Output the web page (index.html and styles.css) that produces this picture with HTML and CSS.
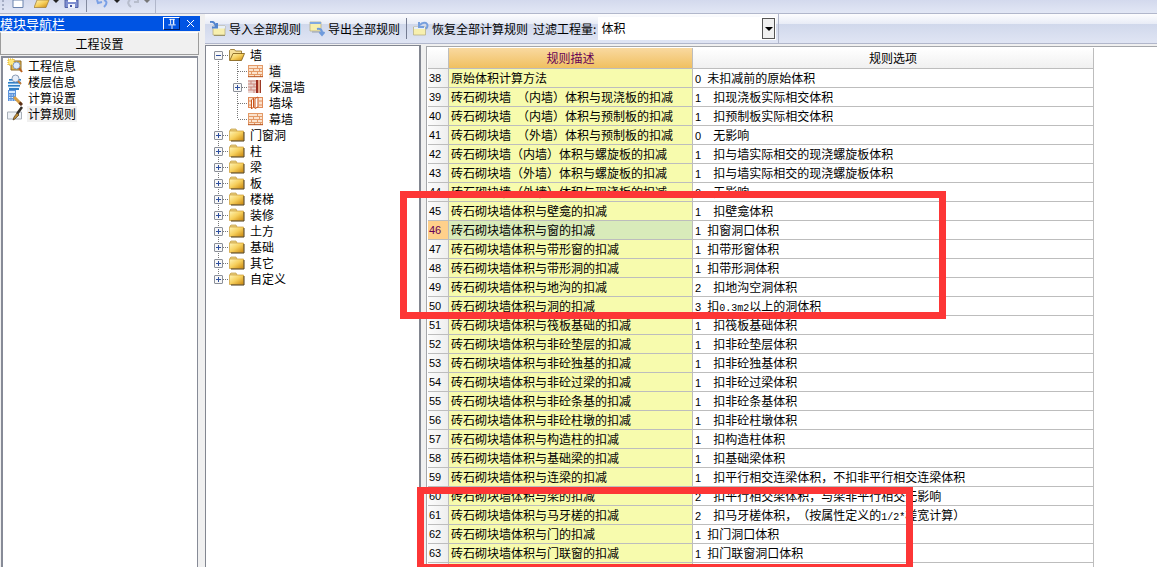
FILE: index.html
```html
<!DOCTYPE html>
<html lang="zh-CN">
<head>
<meta charset="utf-8">
<title>计算规则</title>
<link rel="stylesheet" href="styles.css">
</head>
<body>
<svg class="defs" aria-hidden="true">
  <defs>
    <linearGradient id="gold" x1="0" y1="0" x2="1" y2="1"><stop offset="0" stop-color="#fff6b8"/><stop offset=".5" stop-color="#f6cf5c"/><stop offset="1" stop-color="#c9850c"/></linearGradient>
    <symbol id="folder" viewBox="0 0 16 16"><path d="M1 4V3l1-1h5l1 2" fill="#e8cf80" stroke="#c09a40" stroke-width=".7"/><path d="M.5 4h14v9.500h-14z" fill="url(#gold)" stroke="#c89a34" stroke-width=".7"/><path d="M2 14h13V5" fill="none" stroke="#4d3812"/></symbol>
    <symbol id="folder-open" viewBox="0 0 16 16"><path d="M.5 13.500V3.500l1-1h4l1 1.500h6v3" fill="#f6e09a" stroke="#8d6a1e" stroke-width=".8"/><path d="M.8 13.500L4 6.500h11.500l-3 7z" fill="url(#gold)" stroke="#7a5812" stroke-width=".8"/></symbol>
    <symbol id="bricks" viewBox="0 0 16 16"><path d="M0 2h15v12H0z" fill="#fbe3cd"/><path d="M0 2.500h15M0 5.500h15M0 8.500h15M0 11.500h15M.5 2v12M14.500 2v12M9.500 2v3M5.500 5v3M11.500 5v3M3.500 8v3M9.500 8v3M6.500 11v3M12.500 11v3" stroke="#e39a68" fill="none"/><path d="M0 13.700h15" stroke="#b4511c"/></symbol>
    <symbol id="insulated" viewBox="0 0 16 16"><path d="M0 1h8v13H0z" fill="#ecd5d0"/><path d="M0 2h8M0 5h8M0 8h8M0 11h8M3 2v3M6 5v3M3 8v3M6 11v3" stroke="#cc8a80"/><path d="M8 1h2v13H8z" fill="#9d2e22"/><path d="M10 1h2v13h-2z" fill="#e9a88b"/><path d="M12.500 1v13" stroke="#9c3b27"/></symbol>
    <symbol id="pier" viewBox="0 0 16 16"><path d="M0 2h15v11H0z" fill="#fbe3cd"/><path d="M.5 2v11M14.500 2v11M0 2.500h15M0 6h4M0 10h4M11 6h4M11 10h4M0 12.500h15" stroke="#e08a58" fill="none"/><path d="M3.500 5l2-2v9l-2 2zM7 3.500l3-1.500v10l-3 1.500z" fill="#fff" stroke="#c9551c"/></symbol>
    <symbol id="sheet" viewBox="0 0 16 16"><path d="M3 5h12v9H3z" fill="#f7efae" stroke="#b1aa7c" stroke-width=".7"/><path d="M3 5h12v2.500H3z" fill="#e8f0f8"/><path d="M4 14.500h11" stroke="#9b946b"/></symbol>
  </defs>
</svg>
<div class="app">
  <header class="quickbar">
    <span class="grip"></span>
    <button class="quick" aria-label="新建"><svg viewBox="0 0 16 9"><path d="M3 0h10v7.500H3z" fill="#fff" stroke="#6b83ad"/></svg></button>
    <button class="quick wide" aria-label="打开"><svg viewBox="0 0 16 9"><path d="M0 7.500L3 0h12l-3 7.500z" fill="url(#gold)" stroke="#9b7935" stroke-width=".7"/></svg><i class="drop"></i></button>
    <button class="quick" aria-label="保存"><svg viewBox="0 0 16 9"><path d="M1 0h13v7.500H1z" fill="#7e8ed0" stroke="#5362a6"/><path d="M4 0h8v2H4z" fill="#fff"/><path d="M4 4h7v4H4z" fill="#eef1fb"/><path d="M6 5h2v2H6z" fill="#4353a2"/></svg></button>
    <span class="quick-sep"></span>
    <button class="quick wide" aria-label="撤销"><svg viewBox="0 0 16 9"><path d="M2 0l1 3 4-1M9 0q5 2 0 7" fill="none" stroke="#7aa0e6" stroke-width="2"/></svg><i class="drop"></i></button>
    <button class="quick wide" aria-label="恢复"><svg viewBox="0 0 16 9"><path d="M5 0q-4 3 1 7M9 2h4V0" fill="none" stroke="#b7bdcc" stroke-width="2"/></svg><i class="drop dim"></i></button>
    <span class="quick-end"></span>
  </header>
  <div class="workspace">
    <aside class="navigator">
      <div class="nav-title"><h1>模块导航栏</h1>
        <button class="pin" aria-label="固定"><svg viewBox="0 0 16 12"><path d="M5 1.500h6M6.500 1v6M10 1v6M4 7.500h8M8 8v4M9.500 2v5" stroke="#fff" fill="none"/></svg></button>
        <button class="close" aria-label="关闭"><svg viewBox="0 0 9 9"><path d="M1 1l7 7M8 1L1 8" stroke="#fff" fill="none"/></svg></button>
      </div>
      <button class="nav-section">工程设置</button>
      <ul class="nav-list">
        <li><svg viewBox="0 0 16 16"><path d="M4 3h10v9H4z" fill="#e5b84d" stroke="#8b6721"/><path d="M1 1h6v6H1z" fill="#ffe77a" stroke="#d8a51c" stroke-dasharray="1 1"/><circle cx="9.500" cy="7.500" r="3.500" fill="#dcebff" stroke="#8498b7"/><path d="M12 10l3 4" stroke="#b8601d" stroke-width="2"/></svg><button>工程信息</button></li>
        <li><svg viewBox="0 0 16 16"><path d="M2 5h12v2H2zM1 8h13v2H1zM1 11h12v2H1zM2 14h10v2H2z" fill="#2f7fc5"/><path d="M2 7h12M1 10h13M1 13h12" stroke="#bde3fb"/><circle cx="8.500" cy="4.500" r="3.500" fill="#e7effa" stroke="#8b9db4"/><path d="M11 7l3 3" stroke="#c07b3a" stroke-width="2"/></svg><button>楼层信息</button></li>
        <li><svg viewBox="0 0 16 16"><path d="M1 0h8v11H1z" fill="#5b93dc"/><path d="M2 1h6v2H2z" fill="#d6eaff"/><path d="M2 5h6M2 7.500h6M2 10h6" stroke="#e1f0ff" stroke-dasharray="1.500 1"/><path d="M7 7l7 7" stroke="#d79e45" stroke-width="3"/><path d="M12.500 12.500l2.500 2.500" stroke="#5c321a" stroke-width="3"/></svg><button>计算设置</button></li>
        <li><svg viewBox="0 0 16 16"><path d="M.5 6h14v7H.5z" fill="#eef2f7" stroke="#a8afb8"/><path d="M15 1l-5 7" stroke="#342f2a" stroke-width="2.500"/><path d="M10 7l2 2-4 4-2 1 1-3z" fill="#bc8b35" stroke="#50381a" stroke-width=".7"/></svg><button class="current">计算规则</button></li>
      </ul>
    </aside>
    <main class="main">
      <div class="rulebar">
        <button><svg viewBox="0 0 16 16"><use href="#sheet"/><path d="M0 1q5-1 6 5M2 6.500h5V2" stroke="#5284ce" stroke-width="2" fill="none"/></svg>导入全部规则</button>
        <button><svg viewBox="0 0 16 16"><path d="M1 1h11v9H1z" fill="#f7efae" stroke="#b1aa7c" stroke-width=".7"/><path d="M1 1h11v2H1z" fill="#81a9e0"/><path d="M3 11h8" stroke="#98a0ac"/><path d="M8 8q6-1 5 6M10.500 11l2.500 3 2.500-3" stroke="#6f9bdc" stroke-width="2" fill="none"/></svg>导出全部规则</button>
        <span class="bar-sep"></span>
        <button><svg viewBox="0 0 16 16"><path d="M.5 6h12v8H.5z" fill="#f7efae" stroke="#b1aa7c" stroke-width=".7"/><path d="M1 6h11v2H1z" fill="#e8f0f8"/><path d="M7 4q2-3 6-2 3 2 0 6M6 1v5h5" stroke="#769fdd" stroke-width="2" fill="none"/></svg>恢复全部计算规则</button>
        <label for="filter">过滤工程量:</label>
        <span class="combo"><select id="filter"><option>体积</option></select><span class="combo-arrow"></span></span>
        <span class="bar-end"></span>
      </div>
      <div class="panes">
        <nav class="tree-pane">
          <ul class="tree">
            <li><div class="node"><button class="toggle open" aria-label="折叠"></button><svg><use href="#folder-open"/></svg><span>墙</span></div>
              <ul>
                <li><div class="node leaf"><svg><use href="#bricks"/></svg><span class="current">墙</span></div></li>
                <li><div class="node"><button class="toggle" aria-label="展开"></button><svg><use href="#insulated"/></svg><span>保温墙</span></div></li>
                <li><div class="node leaf"><svg><use href="#pier"/></svg><span>墙垛</span></div></li>
                <li><div class="node leaf"><svg><use href="#bricks"/></svg><span>幕墙</span></div></li>
              </ul>
            </li>
            <li><div class="node"><button class="toggle" aria-label="展开"></button><svg><use href="#folder"/></svg><span>门窗洞</span></div></li>
            <li><div class="node"><button class="toggle" aria-label="展开"></button><svg><use href="#folder"/></svg><span>柱</span></div></li>
            <li><div class="node"><button class="toggle" aria-label="展开"></button><svg><use href="#folder"/></svg><span>梁</span></div></li>
            <li><div class="node"><button class="toggle" aria-label="展开"></button><svg><use href="#folder"/></svg><span>板</span></div></li>
            <li><div class="node"><button class="toggle" aria-label="展开"></button><svg><use href="#folder"/></svg><span>楼梯</span></div></li>
            <li><div class="node"><button class="toggle" aria-label="展开"></button><svg><use href="#folder"/></svg><span>装修</span></div></li>
            <li><div class="node"><button class="toggle" aria-label="展开"></button><svg><use href="#folder"/></svg><span>土方</span></div></li>
            <li><div class="node"><button class="toggle" aria-label="展开"></button><svg><use href="#folder"/></svg><span>基础</span></div></li>
            <li><div class="node"><button class="toggle" aria-label="展开"></button><svg><use href="#folder"/></svg><span>其它</span></div></li>
            <li><div class="node"><button class="toggle" aria-label="展开"></button><svg><use href="#folder"/></svg><span>自定义</span></div></li>
          </ul>
        </nav>
        <section class="table-pane">
          <table class="rules">
            <colgroup><col class="col-no"><col class="col-desc"><col class="col-option"></colgroup>
            <thead><tr><th></th><th class="active">规则描述</th><th>规则选项</th></tr></thead>
            <tbody>
              <tr><th>38</th><td>原始体积计算方法</td><td><b>0</b>&ensp;未扣减前的原始体积</td></tr>
              <tr><th>39</th><td>砖石砌块墙&ensp;（内墙）体积与现浇板的扣减</td><td><b>1</b>&ensp;&ensp;扣现浇板实际相交体积</td></tr>
              <tr><th>40</th><td>砖石砌块墙&ensp;（内墙）体积与预制板的扣减</td><td><b>1</b>&ensp;&ensp;扣预制板实际相交体积</td></tr>
              <tr><th>41</th><td>砖石砌块墙&ensp;（外墙）体积与预制板的扣减</td><td><b>0</b>&ensp;&ensp;无影响</td></tr>
              <tr><th>42</th><td>砖石砌块墙（内墙）体积与螺旋板的扣减</td><td><b>1</b>&ensp;&ensp;扣与墙实际相交的现浇螺旋板体积</td></tr>
              <tr><th>43</th><td>砖石砌块墙（外墙）体积与螺旋板的扣减</td><td><b>1</b>&ensp;&ensp;扣与墙实际相交的现浇螺旋板体积</td></tr>
              <tr><th>44</th><td>砖石砌块墙（外墙）体积与现浇板的扣减</td><td><b>0</b>&ensp;&ensp;无影响</td></tr>
              <tr><th>45</th><td>砖石砌块墙体积与壁龛的扣减</td><td><b>1</b>&ensp;&ensp;扣壁龛体积</td></tr>
              <tr class="selected"><th>46</th><td>砖石砌块墙体积与窗的扣减</td><td><b>1</b>&ensp;扣窗洞口体积</td></tr>
              <tr><th>47</th><td>砖石砌块墙体积与带形窗的扣减</td><td><b>1</b>&ensp;扣带形窗体积</td></tr>
              <tr><th>48</th><td>砖石砌块墙体积与带形洞的扣减</td><td><b>1</b>&ensp;扣带形洞体积</td></tr>
              <tr><th>49</th><td>砖石砌块墙体积与地沟的扣减</td><td><b>2</b>&ensp;&ensp;扣地沟空洞体积</td></tr>
              <tr><th>50</th><td>砖石砌块墙体积与洞的扣减</td><td><b>3</b>&ensp;扣<code>0.3m2</code>以上的洞体积</td></tr>
              <tr><th>51</th><td>砖石砌块墙体积与筏板基础的扣减</td><td><b>1</b>&ensp;&ensp;扣筏板基础体积</td></tr>
              <tr><th>52</th><td>砖石砌块墙体积与非砼垫层的扣减</td><td><b>1</b>&ensp;&ensp;扣非砼垫层体积</td></tr>
              <tr><th>53</th><td>砖石砌块墙体积与非砼独基的扣减</td><td><b>1</b>&ensp;&ensp;扣非砼独基体积</td></tr>
              <tr><th>54</th><td>砖石砌块墙体积与非砼过梁的扣减</td><td><b>1</b>&ensp;&ensp;扣非砼过梁体积</td></tr>
              <tr><th>55</th><td>砖石砌块墙体积与非砼条基的扣减</td><td><b>1</b>&ensp;&ensp;扣非砼条基体积</td></tr>
              <tr><th>56</th><td>砖石砌块墙体积与非砼柱墩的扣减</td><td><b>1</b>&ensp;&ensp;扣非砼柱墩体积</td></tr>
              <tr><th>57</th><td>砖石砌块墙体积与构造柱的扣减</td><td><b>1</b>&ensp;&ensp;扣构造柱体积</td></tr>
              <tr><th>58</th><td>砖石砌块墙体积与基础梁的扣减</td><td><b>1</b>&ensp;&ensp;扣基础梁体积</td></tr>
              <tr><th>59</th><td>砖石砌块墙体积与连梁的扣减</td><td><b>1</b>&ensp;&ensp;扣平行相交连梁体积，不扣非平行相交连梁体积</td></tr>
              <tr><th>60</th><td>砖石砌块墙体积与梁的扣减</td><td><b>2</b>&ensp;&ensp;扣平行相交梁体积，与梁非平行相交无影响</td></tr>
              <tr><th>61</th><td>砖石砌块墙体积与马牙槎的扣减</td><td><b>2</b>&ensp;&ensp;扣马牙槎体积，（按属性定义的<code>1/2*</code>槎宽计算）</td></tr>
              <tr><th>62</th><td>砖石砌块墙体积与门的扣减</td><td><b>1</b>&ensp;扣门洞口体积</td></tr>
              <tr><th>63</th><td>砖石砌块墙体积与门联窗的扣减</td><td><b>1</b>&ensp;扣门联窗洞口体积</td></tr>
              <tr><th></th><td></td><td></td></tr>
            </tbody>
          </table>
          <div class="mark mark-openings"></div>
          <div class="mark mark-doors"></div>
        </section>
      </div>
    </main>
  </div>
</div>
</body>
</html>
```
FILE: styles.css
```css
* { box-sizing: border-box; }

body {
  margin: 0;
  overflow: hidden;
  background: #f0f0f0;
  color: #000;
  font: 12px/16px "Noto Sans CJK SC", "Liberation Sans", sans-serif;
  text-spacing-trim: space-all;
}

button {
  margin: 0;
  padding: 0;
  border: 0;
  background: none;
  color: inherit;
  font: inherit;
}

ul {
  margin: 0;
  padding: 0;
  list-style: none;
}

svg {
  display: block;
  flex: none;
  width: 16px;
  height: 16px;
}

.defs {
  position: absolute;
  width: 0;
  height: 0;
}

.app {
  display: flex;
  flex-direction: column;
  height: 100vh;
}

/* Quick access strip */
.quickbar {
  display: flex;
  flex: none;
  align-items: flex-start;
  height: 14px;
  padding-left: 2px;
  border-bottom: 1px solid #b1b7cb;
  background: linear-gradient(#d3d9ed, #e2e7f5);
}

.grip {
  width: 2px;
  height: 11px;
  margin-right: 6px;
  background: repeating-linear-gradient(#a5adc4 0 2px, transparent 2px 4px);
}

.quick {
  display: flex;
  gap: 3px;
  margin-right: 8px;
}

.quick.wide { margin-right: 5px; }

.quick svg { height: 9px; }

.drop {
  border: 3px solid transparent;
  border-top-color: #222;
  border-bottom: 0;
}

.drop.dim { border-top-color: #777; }

.quick-sep {
  width: 1px;
  height: 12px;
  margin-right: 8px;
  margin-left: -2px;
  background: #848ba0;
}

.quick-end {
  width: 1px;
  height: 13px;
  background: #b1b7cb;
}

.workspace {
  display: flex;
  flex: 1;
  min-height: 0;
}

/* Module navigator */
.navigator {
  display: flex;
  flex: none;
  flex-direction: column;
  width: 200px;
  padding-top: 2px;
}

.nav-title {
  display: flex;
  align-items: center;
  height: 15px;
  padding-right: 5px;
  background: #0054e3;
  color: #fff;
}

.nav-title h1 {
  flex: 1;
  margin: 0;
  font: inherit;
  font-size: 13px;
}

.pin {
  display: grid;
  width: 17px;
  height: 13px;
  place-items: center;
  border: 1px solid #fff;
  border-right-color: #001d63;
  border-bottom-color: #001d63;
}

.pin svg { height: 11px; }

.close {
  margin-left: 6px;
}

.close svg {
  width: 9px;
  height: 9px;
}

.nav-section {
  height: 23px;
  margin: 1px 1px 1px 0;
  border: 1px solid #9c9c9c;
  border-top-color: #fff;
  background: #f0f0f0;
}

.nav-list {
  flex: 1;
  margin-right: 2px;
  margin-left: 1px;
  padding-left: 4px;
  border: 2px solid #878b97;
  border-right-width: 1px;
  border-bottom: 0;
  background: #fff;
}

.nav-list li {
  display: flex;
  gap: 4px;
  height: 16px;
}

.nav-list button {
  padding: 0 1px;
}

.current { background: #f0f0f0; }

/* Rule area */
.main {
  display: flex;
  flex: 1;
  flex-direction: column;
  min-width: 0;
  padding-left: 5px;
}

.rulebar {
  display: flex;
  flex: none;
  align-items: center;
  height: 30px;
  padding-left: 5px;
  border-bottom: 1px solid #b1b7cb;
  background: linear-gradient(#fdfdfe, #e9edf7 33%, #d0d8eb 34%, #e0e5f4);
}

.rulebar button {
  display: flex;
  gap: 3px;
  margin-right: 8px;
  white-space: nowrap;
}

.bar-sep {
  width: 1px;
  height: 21px;
  margin-right: 6px;
  margin-left: -2px;
  background: #747b91;
}

.rulebar button + label {
  margin-left: -3px;
  white-space: nowrap;
}

.combo {
  position: relative;
  width: 178px;
  height: 23px;
  margin-left: 2px;
}

.combo select {
  width: 100%;
  height: 100%;
  padding: 0 3px 2px;
  border: 0;
  border-radius: 0;
  outline: 0;
  appearance: none;
  background: #fff;
  color: #000;
  font: inherit;
}

.combo-arrow {
  position: absolute;
  top: 1px;
  right: 1px;
  display: grid;
  width: 13px;
  height: 21px;
  place-items: center;
  border: 1px solid #555;
  background: #f0f0f0;
  pointer-events: none;
}

.combo-arrow::before {
  border: 4px solid transparent;
  border-top-color: #000;
  border-bottom: 0;
  content: "";
}

.bar-end {
  width: 1px;
  height: 100%;
  margin-left: 2px;
  background: #b1b7cb;
}

.panes {
  display: flex;
  flex: 1;
  min-height: 0;
  padding-top: 1px;
}

/* Component tree */
.tree-pane {
  flex: none;
  width: 216px;
  padding: 1px 0 0 8px;
  border: 1px solid #828690;
  border-right-width: 2px;
  border-bottom: 0;
  background: #fff;
}

.tree li {
  background: repeating-linear-gradient(#777 0 1px, transparent 1px 2px) 4px 0 / 1px 100% no-repeat;
}

.tree li:last-child { background-size: 1px 8px; }

.tree > li:first-child { background-position: 4px 8px; }

.tree ul { margin-left: 19px; }

.node {
  display: flex;
  align-items: center;
  height: 16px;
  background: repeating-linear-gradient(90deg, #777 0 1px, transparent 1px 2px) 5px 8px / 10px 1px no-repeat;
}

.node.leaf { padding-left: 15px; }

.node span { margin-left: 5px; }

.toggle {
  width: 9px;
  height: 9px;
  margin-right: 6px;
  border: 1px solid #8b8f98;
  border-radius: 1px;
  background:
    linear-gradient(#2e4f9e, #2e4f9e) center / 5px 1px no-repeat,
    linear-gradient(#2e4f9e, #2e4f9e) center / 1px 5px no-repeat,
    #f7f7f7;
}

.toggle.open {
  background:
    linear-gradient(#2e4f9e, #2e4f9e) center / 5px 1px no-repeat,
    #f7f7f7;
}

/* Rule table */
.table-pane {
  position: relative;
  flex: 1;
  min-width: 0;
  margin-top: 1px;
  margin-left: 5px;
  padding: 1px 0 0 1px;
  border-top: 1px solid #a5a7ab;
  border-left: 1px solid #a5a7ab;
  background: #fff;
}

.rules {
  width: 666px;
  table-layout: fixed;
  border-spacing: 0;
}

.col-no { width: 21px; }
.col-desc { width: 244px; }
.col-option { width: 401px; }

.rules th,
.rules td {
  height: 19px;
  padding: 0 2px;
  border-right: 1px solid #bdbdbd;
  border-bottom: 1px solid #bdbdbd;
  font-weight: normal;
  line-height: 18px;
  text-align: left;
  white-space: nowrap;
}

.rules thead th {
  height: 21px;
  padding: 0;
  background: linear-gradient(#fff, #f0f0f0);
  line-height: 20px;
  text-align: center;
}

.rules thead .active {
  background: linear-gradient(#f9d9a0, #f0c060);
  color: #650056;
}

.rules tbody th {
  padding: 0 1px;
  background: linear-gradient(90deg, #fcfcfc, #eee);
  font-family: "Liberation Sans", sans-serif;
  font-size: 11px;
}

.rules td:nth-child(2) { background: #f7fbad; }

.rules .selected th {
  background: #ffd08a;
  color: #650056;
}

.rules .selected td:nth-child(2) { background: #d9ebba; }

.rules b {
  font: 11px/11px "Liberation Sans", sans-serif;
}

.rules code {
  font: 10px/10px "Liberation Mono", monospace;
}

/* Red highlight frames drawn over the grid */
.mark {
  position: absolute;
  border: 7px solid #fd3636;
  pointer-events: none;
}

.mark-openings {
  top: 144px;
  left: -27px;
  width: 546px;
  height: 128px;
}

.mark-doors {
  top: 440px;
  left: -10px;
  width: 496px;
  height: 84px;
}
```
